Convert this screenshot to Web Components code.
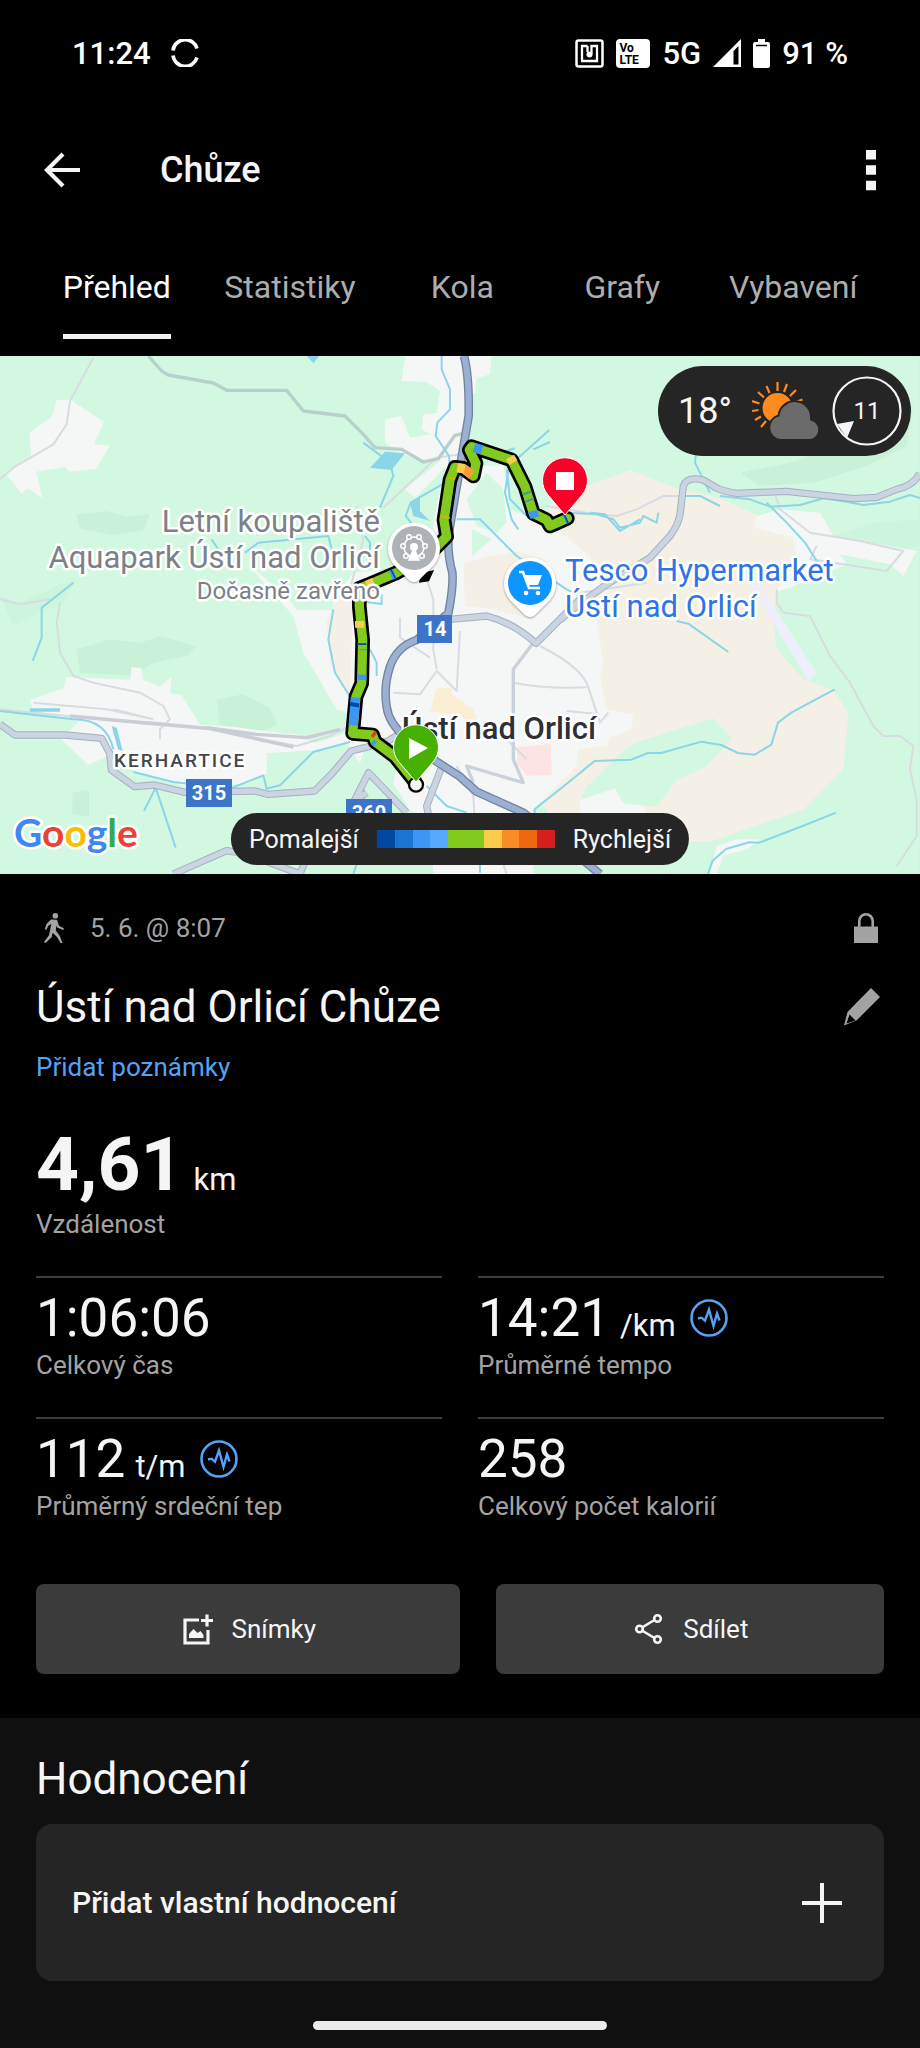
<!DOCTYPE html>
<html lang="cs">
<head>
<meta charset="utf-8">
<meta name="viewport" content="width=device-width, initial-scale=1">
<title>Chůze</title>
<style>
    body{
        margin: 0;
        background: #000;
        color: #f5f5f5;
        font-family: Roboto, "Liberation Sans", sans-serif;
        --grey: #a3a3a3;
        --blue: #55a3f5;
        --gutter: 36px;
    }
</style>
</head>
<body>
<activity-page></activity-page>

<script>
const define = (name, html) => {
    const template = document.createElement('template')
    template.innerHTML = html
    customElements.define(name, class extends HTMLElement{
        constructor() {
            super()
            this.attachShadow({ mode: 'open' })
            this.shadowRoot.appendChild(template.content.cloneNode(true))
        }
    })
}

const icons = {
    sync: [28, 28, '<path d="M2 11.500A12.300 12.300 0 0 1 26 9.500M2 16.500A12.300 12.300 0 0 0 26 18.500" fill="none" stroke="currentColor" stroke-width="3.600"/>'],
    nfc: [29, 29, '<g fill="none" stroke="currentColor"><rect x="1.500" y="1.500" width="26" height="26" rx="2" stroke-width="2.500"/><path d="M12.500 7H7v15h15V7h-5.500v8M12.500 7v6" stroke-width="2.300"/></g><circle cx="14.500" cy="15.500" r="3" fill="currentColor"/>'],
    signal: [28, 28, '<path d="M28 0v28H0z" fill="currentColor"/><path d="M20.500 12l5-5v18.500h-5z" fill="#000"/>'],
    battery: [17, 29, '<path d="M5 0h7v3h3a2 2 0 0 1 2 2v22a2 2 0 0 1-2 2H2a2 2 0 0 1-2-2V5a2 2 0 0 1 2-2h3z" fill="currentColor"/><path d="M3 6.500h11" stroke="#000" stroke-width="1.500"/>'],
    back: [36, 36, '<path d="M36 18H3M19 2L3 18l16 16" fill="none" stroke="currentColor" stroke-width="4.200"/>'],
    more: [10, 42, '<path d="M0 1h10v9.500H0zM0 16.300h10v9.500H0zM0 31.700h10v9.500H0z" fill="currentColor"/>'],
    walk: [20, 30, '<circle cx="11.300" cy="2.800" r="2.800" fill="currentColor"/><path d="M7 6.500l6 .3 2 6 5 2.700-.8 1.600-6-2.600-.8-1.700-.6 4.700 4 5.500 2.700 7-1.700.5-3.600-6.300-4.500-4.400-1 4.400L1.500 30 0 29l5-6.700L7.300 11l-3 1.800-1.800 4-1.700-.5L2.500 11z" fill="currentColor"/>'],
    lock: [24, 30, '<path d="M0 13.500h24V30H0z" fill="currentColor"/><path d="M5.300 14V8a6.600 6.600 0 0 1 13.400 0v6" fill="none" stroke="currentColor" stroke-width="2.600"/>'],
    pencil: [38, 38, '<path d="M28 0l9 9-23.500 23.500L1 37.500 4.500 24z" fill="currentColor"/><path d="M6.500 26.500l6 6-9 3z" fill="#000"/>'],
    pulse: [38, 38, '<circle cx="19" cy="19" r="17.500" fill="none" stroke="currentColor" stroke-width="2.600"/><path d="M8 19.500l3.500-.8 3.500 3L19 10.500l4.500 16.500 3.500-12.500 2.500 7" fill="none" stroke="currentColor" stroke-width="2.400"/>'],
    photo: [36, 36, '<path d="M19 9H5v23h23V19" fill="none" stroke="currentColor" stroke-width="3.200"/><path d="M9 27v-4l4.500-5 4 4 3-2 3 4v3z" fill="currentColor"/><path d="M27 3.500v12M21 9.500h12" stroke="currentColor" stroke-width="3.200"/>'],
    share: [36, 36, '<path d="M26 7.500L8.500 18 26 28.500" fill="none" stroke="currentColor" stroke-width="2.600"/><g fill="#3b3b3b" stroke="currentColor" stroke-width="2.600"><circle cx="26.500" cy="7.500" r="3.300"/><circle cx="8.500" cy="18" r="3.300"/><circle cx="26.500" cy="28.500" r="3.300"/></g>'],
    plus: [40, 40, '<path d="M20 0v40M0 20h40" stroke="currentColor" stroke-width="4"/>'],
    weather: [70, 60, `
        <g stroke="#ff8a1f" stroke-width="2.200"><path d="M25.500 10V1M32 11l3-8M17.500 12L14.500 5M38 15l6-6M12 16.500L6 11M7.500 22.500L0 20M42.500 21.500l8-3M6.500 29L0 30M9 35.500L3 39M14 40l-5 6"/></g>
        <circle cx="25.500" cy="27" r="15" fill="#ff8a1f"/>
        <path d="M28 59a12.500 12.500 0 0 1-1.500-24.500A16 16 0 0 1 59 38.500a10.500 10.500 0 0 1 0 20.500z" fill="#6b6b6b" stroke="#252525" stroke-width="2"/>`],
    wind: [70, 70, '<circle cx="35" cy="35" r="33.500" fill="none" stroke="currentColor" stroke-width="2.200"/><path d="M5 48l17-3-7 17z" fill="currentColor"/>']
}

class FitIcon extends HTMLElement{
    constructor() {
        super()
        this.attachShadow({ mode: 'open' })
    }
    connectedCallback() {
        const [width, height, shape] = icons[this.getAttribute('name')]
        this.shadowRoot.innerHTML = `
            <style>
                :host{
                    display: block;
                    flex: none;
                }
                svg{
                    display: block;
                }
            </style>
            <svg width="${width}" height="${height}" viewBox="0 0 ${width} ${height}" aria-hidden="true">${shape}</svg>
        `
    }
}
customElements.define('fit-icon', FitIcon)

define('status-bar', `
    <style>
        :host{
            display: flex;
            align-items: center;
            justify-content: space-between;
            height: 106px;
            padding: 0 72px;
            font-size: 31px;
            font-weight: 500;
            color: #fff;
        }
        div{
            display: flex;
            align-items: center;
            gap: 12px;
        }
        .left{
            gap: 20px;
        }
        .volte{
            display: block;
            box-sizing: border-box;
            width: 34px;
            height: 29px;
            padding: 3px;
            border-radius: 4px;
            background: #fff;
            color: #000;
            font-size: 12px;
            line-height: 12px;
            font-weight: 700;
        }
    </style>
    <div class="left"><span>11:24</span><fit-icon name="sync"></fit-icon></div>
    <div>
        <fit-icon name="nfc"></fit-icon>
        <span class="volte">Vo<br>LTE</span>
        <span>5G</span>
        <fit-icon name="signal"></fit-icon>
        <fit-icon name="battery"></fit-icon>
        <span>91 %</span>
    </div>
`)

define('top-bar', `
    <style>
        :host{
            display: flex;
            align-items: center;
            height: 128px;
            padding: 0 44px;
        }
        button{
            padding: 0;
            border: 0;
            background: none;
            color: inherit;
        }
        h1{
            flex: 1;
            margin: 0 0 0 80px;
            font-size: 36px;
            font-weight: 500;
        }
    </style>
    <button aria-label="Zpět"><fit-icon name="back"></fit-icon></button>
    <h1><slot></slot></h1>
    <button aria-label="Další možnosti"><fit-icon name="more"></fit-icon></button>
`)

define('tab-link', `
    <style>
        :host{
            display: flex;
            justify-content: center;
            box-sizing: border-box;
            min-width: 160px;
            padding: 0 27px;
        }
        a{
            padding: 35px 0 29px;
            border-bottom: 5px solid transparent;
            color: #adadad;
            font-size: 32px;
            line-height: 36px;
            text-decoration: none;
        }
        :host([active]) a{
            color: #fff;
            border-color: #f2f2f2;
        }
    </style>
    <a href="#"><slot></slot></a>
`)

define('tab-bar', `
    <style>
        :host{
            display: flex;
            padding: 0 var(--gutter) 17px;
        }
    </style>
    <slot></slot>
`)

define('weather-badge', `
    <style>
        :host{
            display: flex;
            align-items: center;
            gap: 10px;
            height: 90px;
            padding: 0 9px 0 20px;
            border-radius: 45px;
            background: #252525;
            font-size: 36px;
        }
        .sky{
            margin-left: 10px;
        }
        .wind{
            display: grid;
            place-items: center;
            font-size: 24px;
        }
        .wind > *{
            grid-area: 1 / 1;
        }
    </style>
    <span>18°</span>
    <fit-icon class="sky" name="weather"></fit-icon>
    <div class="wind"><fit-icon name="wind"></fit-icon><span>11</span></div>
`)

define('pace-legend', `
    <style>
        :host{
            display: flex;
            align-items: center;
            gap: 18px;
            height: 52px;
            padding: 0 18px;
            border-radius: 26px;
            background: #252525;
            font-size: 25px;
            white-space: nowrap;
        }
        .scale{
            width: 178px;
            height: 18px;
            background: linear-gradient(90deg,
                #0049a3 10%, #1b76d3 10% 20%, #3d96f4 20% 30%, #56a9ff 30% 40%,
                #82ca1e 40% 60%, #fbcb4e 60% 70%, #fb8b27 70% 80%, #ed6910 80% 90%, #d52020 90%);
        }
    </style>
    <span>Pomalejší</span>
    <span class="scale"></span>
    <span>Rychlejší</span>
`)

define('route-map', `
    <style>
        :host{
            display: block;
            position: relative;
        }
        .map{
            display: block;
            width: 100%;
            aspect-ratio: 920 / 518;
        }
        weather-badge{
            position: absolute;
            top: 10px;
            right: 9px;
        }
        pace-legend{
            position: absolute;
            bottom: 9px;
            left: 50%;
            transform: translateX(-50%);
        }
        text{
            font-size: 31px;
            paint-order: stroke;
            stroke: #fff;
            stroke-width: 5px;
            stroke-linejoin: round;
        }
        .line path{
            fill: none;
            stroke-linejoin: round;
        }
        .end{
            text-anchor: end;
        }
        .grey{
            fill: #7c8188;
        }
        .small{
            font-size: 24px;
        }
        .blue{
            fill: #2f74e0;
        }
        .town{
            fill: #2d3035;
            font-weight: 500;
        }
        .village{
            font-size: 19px;
            font-weight: 500;
            fill: #43474c;
            letter-spacing: 2px;
        }
        .shield{
            font-size: 20px;
            font-weight: 700;
            fill: #fff;
            stroke: none;
            text-anchor: middle;
        }
        .google{
            font-family: Lato, sans-serif;
            font-size: 39px;
            font-weight: 700;
        }
    </style>
    <svg class="map" viewBox="0 0 920 518" preserveAspectRatio="xMidYMid slice">
        <g transform="scale(.33333)">
            <path fill="#d3f8e2" d="M0 0h2760v1560H0z"/>
            <!-- woodland shades -->
            <g fill="#c9f1d8">
                <path d="M230 475l90-10 60 18 70-10-20 50-90 15-100-20zM230 880l100-30 90 10 60-20 110 30-30 30-100 20-60 40-160-10zM650 1030l80-15 80 40 20 50-60 30-110-30zM217 1310l50-8v80l-50-8zM2220 350l150-30 120-40 150-80 100-50-20 120-120 60-160 50-160 10z"/>
                <path d="M0 720l60 20 110-50 60-20-40 70-90 40-60 30zM2500 540l120-40 140-10v80l-120 20z" opacity=".6"/>
            </g>
            <!-- fields -->
            <path fill="#f5f0e5" d="M1640 452L1770 387 1890 342 2030 397 2160 427 2290 487 2400 557 2390 640 2330 710 2320 800 2330 880 2410 970 2500 1002 2545 1072 2530 1237 2410 1362 2260 1412 2130 1457 1980 1457 1700 1457 1600 1300 1740 1100 1790 790 1790 700z"/>
            <!-- built-up land -->
            <g fill="#f5f6f6">
                <path d="M170 132h42l100 65-30 68 48 4-42 70-80 8-12-14-88 14 20 80-46-30-16 16-48-58 75-58-4-68 66-46z"/>
                <path d="M1215 0H1475L1470 55 1430 67 1425 112 1410 112 1410 332 1510 327 1520 382 1530 462 1650 502 1710 552 1770 602 1800 660 1790 792 1810 920 1800 960 1820 1060 1900 1076 1895 1120 1830 1145 1820 1170 1735 1180 1730 1230 1700 1260 1600 1360 1600 1554 1300 1554 1290 1400 1230 1362 1180 1282 1190 1240 1100 1160 1080 1222 1040 1160 945 1182 800 1192 800 1252 740 1282 560 1292 400 1242 340 1192 265 1227 185 1152 235 1097 100 1062 90 1032 190 997 200 962 390 972 395 932 425 937 430 972 480 992 515 962 510 1012 545 1017 600 1107 700 1112 850 1132 900 1137 945 1162 1040 1130 1050 1080 1030 1065 1010 1060 910 890 880 780 740 622 860 720 890 762 1000 762 1000 730 1060 650 1200 640 1290 560 1320 400 1340 330 1310 360 1245 425 1215 400 1320 315 1270 315 1200 290 1155 260 1155 190 1205 180 1230 245 1290 235 1265 220 1270 175 1310 170 1320 105 1280 78 1205 75z"/>
                <path d="M2270 480l70-20 120 10 40 70 250 45-40 75-40-35-150-30 20 30-170 70-50 15 70-85-10-80-120-30zM1740 1330l105-35 25 45 50-10 30 60-70 20-140-20zM2150 1470l60-20h70l-40 30-70 20-20 54h-20z"/>
            </g>
            <g fill="#d3f8e2">
                <path d="M1400 430l60-80 50 50 10 100-30 30-60-20zM1416 520l60 30-60 50zM1080 1260l60 20 60 90-60-30-60 10zM2140 1087l55 60-75 85-90 40-60 80-100-10-25-45-105 35 20-40 100-100 40-30z"/>
            </g>
            <g fill="#f5f0e5">
                <path d="M1010 735l50-10-10 290-60-90-10-130zM1390 622L1470 600 1560 587 1640 612 1570 650 1515 700 1560 760 1600 790 1480 760 1395 750z"/>
                <path fill="#faefd5" d="M1310 997h45v20l40 20-20 40-85-10zM1380 1035l40 25 15 40-20 0-50-30z"/>
            </g>
            <path fill="#eeeffb" d="M2210 620l20-8 220 340-25 22z"/>
            <path fill="#fde3e3" d="M1552 1174l100-10 3 93-75 2-28-37z"/>

            <!-- streets -->
            <g class="line" fill="none" stroke="#d8dce1" stroke-width="6" stroke-linejoin="round">
                <path d="M0 370l40-35 120-70 40-60 10-70 70-130M1150 455l160-150 70-10"/>
                <path d="M0 730l60 15 90-15M180 740l-10 60 10 90 40 70 60 20 140 30 70 40 20 40-30 30v30"/>
                <path d="M0 1060l300 30 170 10 200 20 120 30 100 20 100-30 60-30M100 1040l220 20 140 30M340 1060l120 30M740 1140l-60-20"/>
                <path d="M1050 700l40-150-20-100"/>
                <path d="M1640 450l120 20 90 10 60-20 80-40h100M2320 400l20 60 90 70 150 25 130 30-50 60-160-25-70-10 20-40M2330 700l0 40 20 30 80 10 60 120 60 80 70 130 30 30h50l40 30-10 70 20 90v110l-60 90"/>
                <path d="M1280 670l20 60 0 150 10 60M1200 785l0 60 90 60M1310 790h80M1180 1010l80 5 50-70 60 60 10-180M1540 980q100 20 220 14M1620 870q140 70 150 140l30 90 25-30M1700 1065l100 10"/>
                <path d="M1370 1230l50 90 10 180M1500 1130l80 80M1480 1440l40 114M1740 710l200-30"/>
            </g>
            <g class="line" stroke="#c9cdd4">
                <path stroke-width="10" d="M210 1080l260 24 160 14 180 40 70 15M620 1115l150 20 150 10 100-25"/>
            </g>
            <g class="line" stroke="#b8d0cd" stroke-width="10">
                <path d="M445 0l40 45 20 12 135 24 40 22h180l50 62 125 15 50 50 40 45 80 5 65 38 45-10 50-70 35-8"/>
                <path stroke="#cbd1d8" d="M1600 860l-60 80v270l30 70-170-50 20 50"/>
            </g>

            <!-- streams -->
            <g class="line" stroke="#8bd5e8" stroke-width="6">
                <path d="M1325 0v40l25 60 0 60-38 40-5 40 40 60 5 70-120 70-15 40 40 50 30 5M1090 260l80 60 10 40-40 95M635 550l20 30M735 590l40-30 210-20 15 60M1095 540l15 20 0 80M1100 738l45 6 0-30"/>
                <path d="M220 680l-95 75v90l-27 70M0 1065l220 25q100 0 120 90M400 1248l120 30 170 20 100-40 10 40 40-10 100-100 110-30M432 1365l35-70 60 180M1000 760l-15 90 20 100 50 80M1110 880l20 40 0 40"/>
                <path d="M1370 490h70l110 110 150 100 60 30M1525 340l-10 70 20 80 20 30M1520 340l10 90 60 60M1420 312l125-35M1550 310l98-88M1600 280l50-22M1700 470l90 5 50 15 20 25 60-15 10-20 40 20 5-30M1770 470l45 5 45 50 60-35M2040 420l60 0 60 30M2160 420l90 10 60 22 90-5 70-20 70 10 50 10 80-10 60-20 100 30 60 5 90-60M2090 270l-5 50 45 90M2300 440l60 60 55 60 45 70"/>
                <path d="M1604 1390v-30l100-80 80-65 110-4 50-20h40l120-34 60 10 50 24 50 5 50-30 20-66 40-30 130-70M2030 795l35 8 120 85M2508 1370l-100 40-130 50-30-1-70 20-40 35-15 42M1280 1290l60 60 60 20M1060 1554l20-60M1440 1500v50"/>
            </g>
            <path fill="#8bd5e8" d="M920 0h38l-18 22zM1110 335l45-48 60 5-40 50zM1230 440l30-20 0 45 30 30-50-15zM90 1057h90v10h-90zM335 1110l15 5 18 70-14-5z"/>

            <!-- main roads, edge then fill -->
            <g class="line">
                <g stroke="#a4b0c2" stroke-width="22">
                    <path d="M0 1105l45 32h150l110 10 24 45 5 50 70 50 60-5 90 22 210-4 40 10 140-10 50-50 60-70 40-10 70-20 50-30"/>
                    <path d="M1680 792l30-25 100-75 140-87 60-65q30-40 32-80l8-70q10-30 60-18l40 24q20 10 60 16l150-6 200 22 70-4 60-24q50-10 70-48"/>
                    <path d="M1350 790l110-10q80 20 148 82l80-80 60-60"/>
                    <path d="M520 1554l160-70 60 10 160 60 20-50M1060 1340l46-90 114 120M1330 1220l-50 130 10 50M1070 1330l30-20"/>
                </g>
                <g stroke="#cbd5e1" stroke-width="16">
                    <path d="M0 1105l45 32h150l110 10 24 45 5 50 70 50 60-5 90 22 210-4 40 10 140-10 50-50 60-70 40-10 70-20 50-30"/>
                    <path d="M1680 792l30-25 100-75 140-87 60-65q30-40 32-80l8-70q10-30 60-18l40 24q20 10 60 16l150-6 200 22 70-4 60-24q50-10 70-48"/>
                    <path d="M1350 790l110-10q80 20 148 82l80-80 60-60"/>
                    <path d="M520 1554l160-70 60 10 160 60 20-50M1060 1340l46-90 114 120M1330 1220l-50 130 10 50M1070 1330l30-20"/>
                </g>
                <path stroke="#71849f" stroke-width="26" d="M1392 0q16 60 14 180L1370 392 1345 540q-2 60 12 110 4 40-12 122l-95 80q-60 20-80 80-20 60-10 120 6 50 60 95l90 70L1380 1262 1430 1307 1570 1370 1765 1525 1800 1554"/>
                <path stroke="#9bb0d2" stroke-width="18" d="M1392 0q16 60 14 180L1370 392 1345 540q-2 60 12 110 4 40-12 122l-95 80q-60 20-80 80-20 60-10 120 6 50 60 95l90 70L1380 1262 1430 1307 1570 1370 1765 1525 1800 1554"/>
            </g>

            <!-- walked route -->
            <path d="M1262 652l40-10-15 34-30 4z"/>
            <g class="line" stroke-linecap="round">
                <path stroke="#000" stroke-width="44" d="M1245 1277L1185 1202 1125 1157 1118 1137 1058 1132 1068 1022 1085 982 1088 852 1078 752 1078 697 1110 684 1190 650 1290 592 1340 542 1332 492 1350 372 1365 334 1390 337 1420 360 1428 322 1408 282 1415 272 1535 312 1575 392 1600 472 1640 492 1650 510 1702 487"/>
                <path stroke="#82ca1e" stroke-width="28" d="M1245 1277L1185 1202 1125 1157 1118 1137 1058 1132 1068 1022 1085 982 1088 852 1078 752 1078 697 1110 684 1190 650 1290 592 1340 542 1332 492 1350 372 1365 334 1390 337 1420 360 1428 322 1408 282 1415 272 1535 312 1575 392 1600 472 1640 492 1650 510 1702 487"/>
            </g>
            <g class="line" stroke-width="28">
                <path stroke="#fb9b35" d="M1390 337l26 20"/>
                <path stroke="#fbcb4e" d="M1372 335l22 4M1530 303l10 17M1100 688l22-9M1079 795v20"/>
                <path stroke="#3d96f4" d="M1422 274l24 8M1598 465l6 20M1086 956l-1 16M1066 1024l-6 84M1173 658l12-5M1694 490l8-3"/>
                <path stroke="#0049a3" d="M1085 862v5M1065 1040l-2 12M1178 656l4-2M1696 489l4-2"/>
                <path stroke="#4597a8" d="M1580 408l2 6M1588 430l2 5M1087 880v3"/>
                <path stroke="#e33a20" stroke-width="20" d="M1118 1132l8 6"/>
                <path stroke="#3d96f4" stroke-width="16" d="M1118 1156l8 8"/>
                <path stroke="#e0b400" stroke-width="4" d="M1325 480l25 6M1345 365l20 4"/>
            </g>
            <circle cx="1248" cy="1286" r="21" fill="#f5f6f6" stroke="#000" stroke-width="7"/>
        </g>

        <text class="end grey" x="380" y="176">Letní koupaliště</text>
        <text class="end grey" x="380" y="212">Aquapark Ústí nad Orlicí</text>
        <text class="end grey small" x="380" y="243">Dočasně zavřeno</text>
        <text class="blue" x="565" y="225">Tesco Hypermarket</text>
        <text class="blue" x="565" y="261">Ústí nad Orlicí</text>
        <text class="end town" x="596" y="383">Ústí nad Orlicí</text>
        <text class="village" x="114" y="411">KERHARTICE</text>
        <path fill="#3d74c7" d="M417 259h35v28h-35zM186 423h46v28h-46zM346 443h46v28h-46z"/>
        <text class="shield" x="435" y="280">14</text>
        <text class="shield" x="209" y="444">315</text>
        <text class="shield" x="369" y="464">360</text>
        <text class="google" x="14" y="491"><tspan fill="#4285f4">G</tspan><tspan fill="#ea4335">o</tspan><tspan fill="#fbbc05">o</tspan><tspan fill="#4285f4">g</tspan><tspan fill="#34a853">l</tspan><tspan fill="#ea4335">e</tspan></text>

        <!-- place pins -->
        <g filter="drop-shadow(0 1px 1px rgb(0 0 0 / .35))" fill="#fff">
            <path d="M414 226q-4 0-7-4l-13-13a26 26 0 1 1 40 0l-13 13q-3 4-7 4z"/>
            <path d="M530 261q-4 0-7-4l-13-13a26 26 0 1 1 40 0l-13 13q-3 4-7 4z"/>
        </g>
        <circle cx="414" cy="192" r="22" fill="#aeb1b5"/>
        <g fill="none" stroke="#fff" stroke-width="1.500">
            <circle cx="414" cy="191" r="10"/>
            <path d="M414 192l-5 12h10z" fill="#fff"/>
        </g>
        <g fill="#aeb1b5" stroke="#fff" stroke-width="1.500">
            <circle cx="409" cy="181" r="2.300"/><circle cx="419" cy="181" r="2.300"/>
            <circle cx="403" cy="190" r="2.300"/><circle cx="425" cy="190" r="2.300"/>
            <circle cx="406" cy="200" r="2.300"/><circle cx="422" cy="200" r="2.300"/>
        </g>
        <circle cx="414" cy="191" r="4" fill="#fff"/>
        <circle cx="530" cy="227" r="22" fill="#0d96ff"/>
        <path d="M519 216h4l6 16h11" fill="none" stroke="#fff" stroke-width="2.500"/>
        <path d="M523 219h19l-4 10h-11z" fill="#fff"/>
        <circle cx="526" cy="237" r="2.300" fill="#fff"/><circle cx="538" cy="237" r="2.300" fill="#fff"/>

        <!-- finish and start -->
        <path fill="#fb0029" stroke="#fff" stroke-width="1" d="M565 159l-17-20a22.500 22.500 0 1 1 34 0z"/>
        <path fill="#fff" d="M556 116h18v18h-18z"/>
        <path fill="#47b000" stroke="#fff" stroke-width="1" d="M416 426l-17-20a22.500 22.500 0 1 1 34 0z"/>
        <path fill="#fff" d="M409 382l19 10-19 11z"/>
    </svg>
    <weather-badge></weather-badge>
    <pace-legend></pace-legend>
`)

define('activity-heading', `
    <style>
        :host{
            display: block;
            padding: 36px var(--gutter) 0;
        }
        .row{
            display: flex;
            align-items: center;
            justify-content: space-between;
            color: var(--grey);
        }
        .date{
            display: flex;
            align-items: center;
            gap: 26px;
            padding: 0 8px;
            font-size: 26px;
            line-height: 36px;
        }
        .lock{
            padding: 0 6px;
        }
        .title{
            margin-top: 25px;
        }
        h2{
            margin: 0;
            color: #f5f5f5;
            font-size: 44px;
            line-height: 72px;
            font-weight: 400;
        }
        button{
            padding: 0 3px;
            border: 0;
            background: none;
            color: inherit;
        }
        a{
            display: inline-block;
            margin-top: 6px;
            color: var(--blue);
            font-size: 26px;
            line-height: 36px;
            text-decoration: none;
        }
    </style>
    <div class="row">
        <div class="date"><fit-icon name="walk"></fit-icon><slot name="date"></slot></div>
        <fit-icon class="lock" name="lock"></fit-icon>
    </div>
    <div class="row title">
        <h2><slot></slot></h2>
        <button aria-label="Upravit název"><fit-icon name="pencil"></fit-icon></button>
    </div>
    <a href="#">Přidat poznámky</a>
`)

define('activity-stat', `
    <style>
        :host{
            display: block;
            box-sizing: border-box;
            height: 141px;
            border-top: 2px solid #3d3d3d;
        }
        :host([large]){
            height: 191px;
            border: 0;
        }
        .value{
            display: flex;
            align-items: baseline;
            padding-top: 11px;
            font-size: 53px;
            line-height: 58px;
        }
        .unit{
            margin-left: 10px;
            font-size: 31px;
            line-height: 36px;
        }
        ::slotted(fit-icon){
            align-self: center;
            margin-left: 14px;
            color: var(--blue);
        }
        .label{
            color: var(--grey);
            font-size: 26px;
            line-height: 36px;
        }
        :host([large]) .value{
            padding-top: 38px;
            font-size: 75px;
            line-height: 83px;
        }
        :host([large]) .number{
            font-weight: 700;
        }
    </style>
    <div class="value">
        <span class="number"><slot></slot></span>
        <span class="unit"><slot name="unit"></slot></span>
        <slot name="icon"></slot>
    </div>
    <div class="label"><slot name="label"></slot></div>
`)

define('stat-grid', `
    <style>
        :host{
            display: grid;
            grid-template-columns: 1fr 1fr;
            column-gap: 36px;
            padding: 0 var(--gutter);
        }
        ::slotted([large]){
            grid-column: 1 / -1;
        }
    </style>
    <slot></slot>
`)

define('action-button', `
    <style>
        :host{
            display: block;
        }
        button{
            display: flex;
            align-items: center;
            justify-content: center;
            gap: 16px;
            width: 100%;
            height: 90px;
            padding: 0;
            border: 0;
            border-radius: 8px;
            background: #3b3b3b;
            color: inherit;
            font: inherit;
            font-size: 26px;
        }
    </style>
    <button><slot name="icon"></slot><span><slot></slot></span></button>
`)

define('action-row', `
    <style>
        :host{
            display: grid;
            grid-template-columns: 12fr 11fr;
            gap: 36px;
            padding: 26px var(--gutter) 44px;
        }
    </style>
    <slot></slot>
`)

define('rating-section', `
    <style>
        :host{
            display: block;
            padding: 34px var(--gutter) 40px;
            background: #101010;
        }
        h2{
            margin: 0 0 18px;
            font-size: 44px;
            line-height: 54px;
            font-weight: 400;
        }
        button{
            display: flex;
            align-items: center;
            justify-content: space-between;
            width: 100%;
            height: 157px;
            padding: 0 42px 0 36px;
            border: 0;
            border-radius: 16px;
            background: #252525;
            color: inherit;
            font: inherit;
            font-size: 30px;
            font-weight: 500;
        }
    </style>
    <h2><slot></slot></h2>
    <button>Přidat vlastní hodnocení<fit-icon name="plus"></fit-icon></button>
`)

define('home-indicator', `
    <style>
        :host{
            display: block;
            padding-bottom: 18px;
            background: #101010;
        }
        div{
            width: 32%;
            height: 9px;
            margin: 0 auto;
            border-radius: 5px;
            background: #ebebeb;
        }
    </style>
    <div></div>
`)

define('activity-page', `
    <style>
        :host{
            display: block;
        }
    </style>
    <status-bar></status-bar>
    <top-bar>Chůze</top-bar>
    <tab-bar>
        <tab-link active>Přehled</tab-link>
        <tab-link>Statistiky</tab-link>
        <tab-link>Kola</tab-link>
        <tab-link>Grafy</tab-link>
        <tab-link>Vybavení</tab-link>
    </tab-bar>
    <route-map></route-map>
    <activity-heading><span slot="date">5. 6. @ 8:07</span>Ústí nad Orlicí Chůze</activity-heading>
    <stat-grid>
        <activity-stat large>4,61<span slot="unit">km</span><span slot="label">Vzdálenost</span></activity-stat>
        <activity-stat>1:06:06<span slot="label">Celkový čas</span></activity-stat>
        <activity-stat>14:21<span slot="unit">/km</span><fit-icon slot="icon" name="pulse"></fit-icon><span slot="label">Průměrné tempo</span></activity-stat>
        <activity-stat>112<span slot="unit">t/m</span><fit-icon slot="icon" name="pulse"></fit-icon><span slot="label">Průměrný srdeční tep</span></activity-stat>
        <activity-stat>258<span slot="label">Celkový počet kalorií</span></activity-stat>
    </stat-grid>
    <action-row>
        <action-button><fit-icon slot="icon" name="photo"></fit-icon>Snímky</action-button>
        <action-button><fit-icon slot="icon" name="share"></fit-icon>Sdílet</action-button>
    </action-row>
    <rating-section>Hodnocení</rating-section>
    <home-indicator></home-indicator>
`)
</script>
</body>
</html>
